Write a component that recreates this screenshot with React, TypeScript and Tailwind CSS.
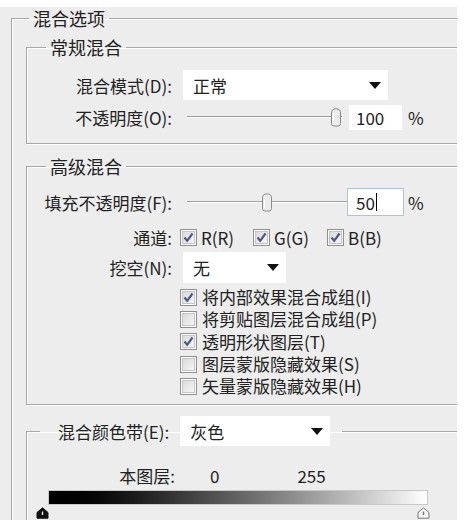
import React from "react";

const font = "font-['Noto_Sans_CJK_SC',sans-serif]";
const groove = "border border-[#a6a6a6] shadow-[inset_1px_1px_0_#fff,1px_1px_0_#fff]";

function Arrow() {
  return (
    <svg width="12" height="7" viewBox="0 0 12 7" className="shrink-0">
      <path d="M0 0 H12 L6 7 Z" fill="#111" />
    </svg>
  );
}

function Dropdown({ value, className }: { value: string; className: string }) {
  return (
    <div className={`flex items-center justify-between bg-white pl-[10px] pr-[7px] ${className}`}>
      <span>{value}</span>
      <Arrow />
    </div>
  );
}

function Check({ checked }: { checked?: boolean }) {
  return (
    <svg width="17" height="17" viewBox="0 0 17 17" className="shrink-0">
      <defs>
        <linearGradient id="cbg" x1="0" y1="0" x2="1" y2="1">
          <stop offset="0" stopColor="#d9d9d9" />
          <stop offset="1" stopColor="#f7f7f7" />
        </linearGradient>
      </defs>
      <rect x="0.5" y="0.5" width="16" height="16" fill="#fff" stroke="#8f8f8f" />
      <rect x="2.5" y="2.5" width="12" height="12" fill="url(#cbg)" stroke="#c4c4c4" />
      {checked && (
        <path d="M4.5 8.5 L7.2 11.8 L12.5 4.5" fill="none" stroke="#46588f" strokeWidth="2.2" />
      )}
    </svg>
  );
}

function Thumb() {
  return (
    <svg width="12" height="19" viewBox="0 0 12 19">
      <path
        d="M1.5 5 Q1.5 0.8 6 0.8 Q10.5 0.8 10.5 5 V15.5 Q10.5 18 8 18 H4 Q1.5 18 1.5 15.5 Z"
        fill="#ececec"
        stroke="#8a8a8a"
      />
      <path d="M3.5 5 V15" stroke="#fff" />
    </svg>
  );
}

function Slider({ ratio, width }: { ratio: number; width: number }) {
  return (
    <div className="relative h-[19px]" style={{ width }}>
      <div className="absolute left-0 right-0 top-[8px] h-[1px] bg-[#9d9d9d]" />
      <div className="absolute left-0 right-0 top-[9px] h-[1px] bg-white" />
      <div className="absolute top-0" style={{ left: ratio * (width - 12) }}>
        <Thumb />
      </div>
    </div>
  );
}

function Marker({ dark }: { dark?: boolean }) {
  return (
    <svg width="13" height="12" viewBox="0 0 13 12">
      <path
        d="M6.5 0.8 L12 5.5 V11.2 H1 V5.5 Z"
        fill={dark ? "#111" : "#f4f4f4"}
        stroke={dark ? "#111" : "#777"}
      />
      <path d="M6.5 4.5 V8" stroke={dark ? "#fff" : "#777"} strokeWidth="1.4" />
    </svg>
  );
}

function Row({ label, children, className = "" }: { label: string; children: React.ReactNode; className?: string }) {
  return (
    <div className={`flex items-center ${className}`}>
      <div className="w-[145px] shrink-0 text-right whitespace-nowrap">{label}</div>
      {children}
    </div>
  );
}

const options = [
  { text: "将内部效果混合成组(I)", checked: true },
  { text: "将剪贴图层混合成组(P)", checked: false },
  { text: "透明形状图层(T)", checked: true },
  { text: "图层蒙版隐藏效果(S)", checked: false },
  { text: "矢量蒙版隐藏效果(H)", checked: false },
];

export default function App() {
  return (
    <div className={`h-[520px] w-[468px] overflow-hidden bg-white text-[17px] leading-[21px] text-[#222] ${font}`}>
      <div className="mt-[7px] h-[513px] w-[457px] overflow-hidden bg-[#ededed]">
        <fieldset className={`ml-[11px] w-[480px] min-w-0 p-0 ${groove}`}>
          <legend className="ml-[17px] px-[4px] text-[18px] leading-[22px]">混合选项</legend>

          {/* 常规混合 */}
          <fieldset className={`mt-[7px] ml-[14px] w-[450px] min-w-0 pb-[13px] ${groove}`}>
            <legend className="ml-[19px] px-[4px] text-[18px] leading-[22px]">常规混合</legend>
            <Row label="混合模式(D):" className="mt-[12px]">
              <Dropdown value="正常" className="ml-[11px] h-[30px] w-[205px]" />
            </Row>
            <Row label="不透明度(O):" className="mt-[5px] h-[25px]">
              <div className="ml-[15px]">
                <Slider ratio={1} width={155} />
              </div>
              <div className="ml-[7px] flex h-[25px] w-[53px] items-center bg-white pl-[7px]">100</div>
              <span className="ml-[6px]">%</span>
            </Row>
          </fieldset>

          {/* 高级混合 */}
          <fieldset className={`mt-[11px] ml-[14px] w-[450px] min-w-0 pb-[7px] ${groove}`}>
            <legend className="ml-[19px] px-[4px] text-[18px] leading-[22px]">高级混合</legend>
            <Row label="填充不透明度(F):" className="mt-[11px] h-[28px]">
              <div className="ml-[15px]">
                <Slider ratio={0.5} width={160} />
              </div>
              <div className="flex h-[28px] w-[57px] items-center border border-[#a9c4dc] bg-white pl-[8px]">
                50<span className="ml-[1px] h-[18px] w-[1px] bg-black" />
              </div>
              <span className="ml-[4px]">%</span>
            </Row>
            <Row label="通道:" className="mt-[11px] h-[20px]">
              <div className="ml-[8px] flex items-center gap-[4px]">
                <Check checked />
                <span>R(R)</span>
              </div>
              <div className="ml-[19px] flex items-center gap-[4px]">
                <Check checked />
                <span>G(G)</span>
              </div>
              <div className="ml-[18px] flex items-center gap-[4px]">
                <Check checked />
                <span>B(B)</span>
              </div>
            </Row>
            <Row label="挖空(N):" className="mt-[5px]">
              <Dropdown value="无" className="ml-[11px] h-[31px] w-[103px]" />
            </Row>
            <div className="mt-[3px] pl-[153px]">
              {options.map((o) => (
                <div key={o.text} className="flex h-[22.3px] items-center gap-[5px] whitespace-nowrap leading-[20px]">
                  <Check checked={o.checked} />
                  <span>{o.text}</span>
                </div>
              ))}
            </div>
          </fieldset>

          {/* 混合颜色带 */}
          <fieldset className={`mt-[11px] ml-[14px] w-[450px] min-w-0 pb-[20px] ${groove}`}>
            <legend className="ml-[13px] flex items-center pl-[18px] pr-[12px]">
              <span className="whitespace-nowrap">混合颜色带(E):</span>
              <Dropdown value="灰色" className="ml-[11px] h-[30px] w-[150px]" />
            </legend>
            <div className="mt-[18px] flex h-[22px] items-center">
              <span className="ml-[78px] w-[70px] text-right">本图层:</span>
              <span className="ml-[35px]">0</span>
              <span className="ml-[78px]">255</span>
            </div>
            <div className="ml-[21px] mt-[4px] h-[15px] w-[380px] border border-[#c8c8c8] bg-gradient-to-r from-black to-white" />
            <div className="ml-[9px] mt-[2px] flex w-[394px] justify-between">
              <Marker dark />
              <Marker />
            </div>
          </fieldset>
        </fieldset>
      </div>
    </div>
  );
}
